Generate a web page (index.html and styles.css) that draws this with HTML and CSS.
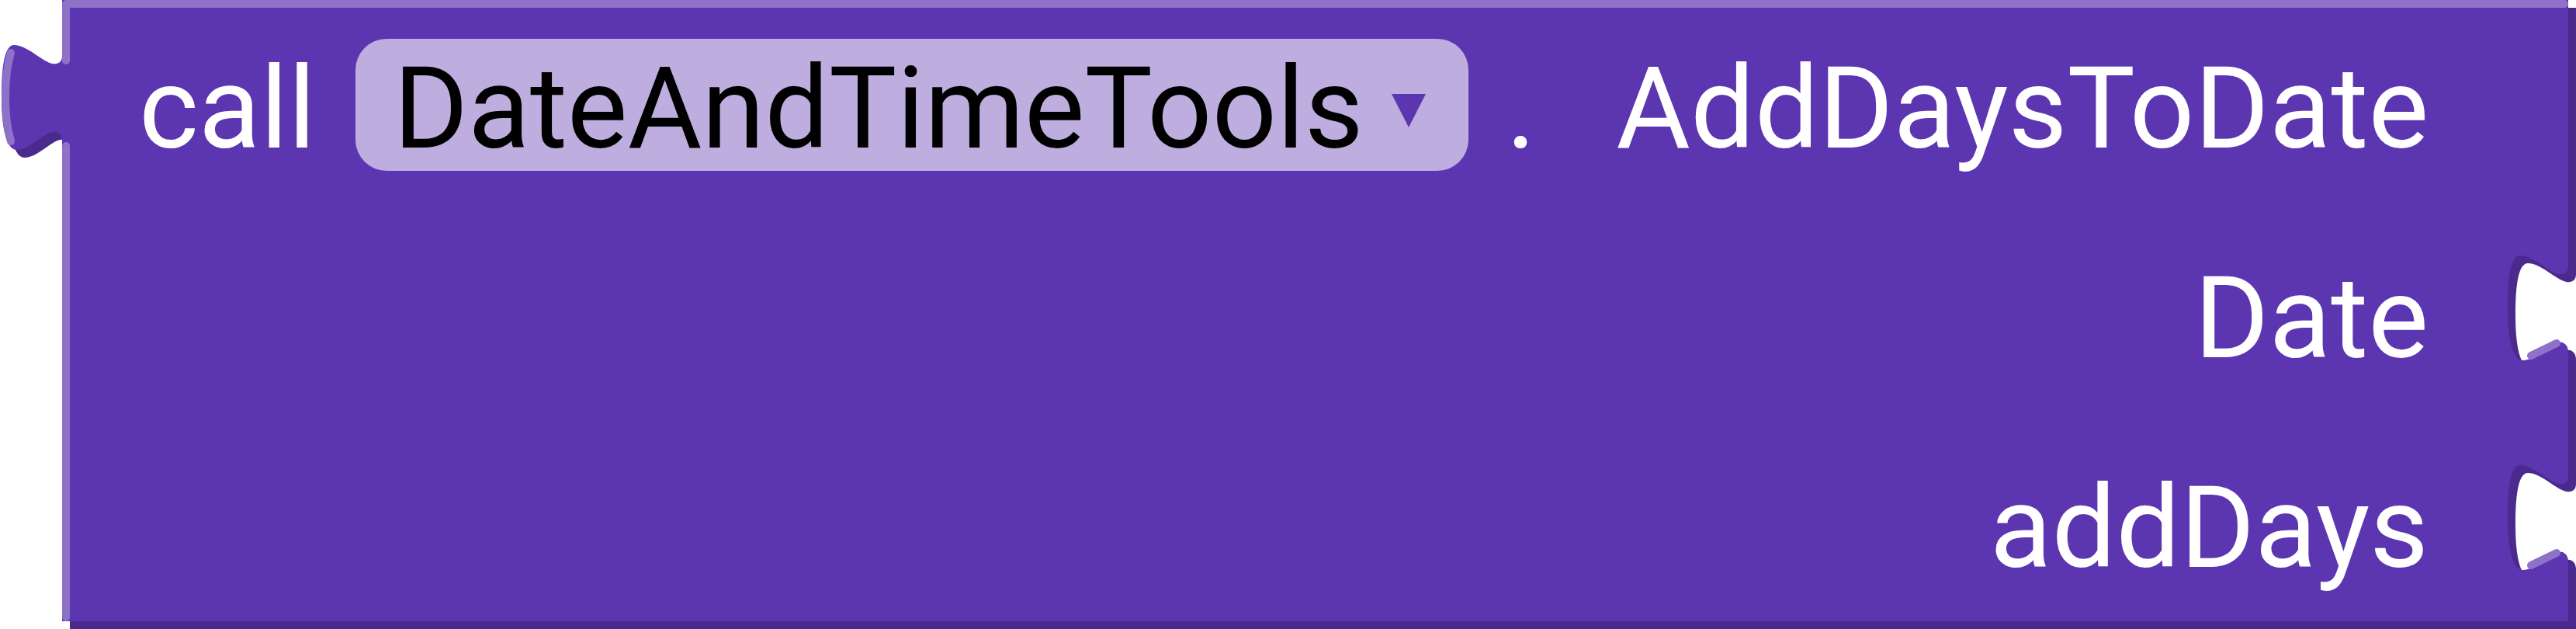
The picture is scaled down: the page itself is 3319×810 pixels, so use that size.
FILE: index.html
```html
<!DOCTYPE html>
<html lang="en">
<head>
    <meta charset="UTF-8">
    <title>call DateAndTimeTools.AddDaysToDate</title>
    <link rel="stylesheet" href="styles.css">
</head>
<body>
    <div class="block">
        <svg class="block-shape" width="3319" height="810" viewBox="0 0 3319 810">
            <defs>
                <path id="outline" d="M80,0 H3309 V343
                    C3309,351 3304,354 3297,353 C3284,351 3264,329 3247,329 C3234,329 3231,361 3231,396 C3231,436 3237,464 3251,464 C3267,464 3284,443 3297,441 C3304,440 3309,445 3309,453
                    V613
                    C3309,621 3304,624 3297,623 C3284,621 3264,599 3247,599 C3234,599 3231,631 3231,666 C3231,706 3237,734 3251,734 C3267,734 3284,713 3297,711 C3304,710 3309,715 3309,723
                    V800 H80 V182
                    C80,174 75,169 68,170 C55,172 38,193 22,193 C8,193 2,165 2,125 C2,90 5,58 18,58 C35,58 55,80 68,82 C75,83 80,80 80,72 Z"/>
            </defs>
            <use href="#outline" class="shape-dark" transform="translate(10 10)"/>
            <use href="#outline" class="shape-main"/>
            <path class="shape-light" d="M85,78 V5 H3304"/>
            <path class="shape-light" d="M85,188 V795"/>
            <path class="shape-light" d="M14,68 C9,85 7,105 7,125 C7,145 9,165 14,182"/>
            <path class="shape-light" d="M3261,458 L3294,442"/>
            <path class="shape-light" d="M3261,728 L3294,712"/>
        </svg>

        <div class="block-rows">
            <div class="block-row">
                <span>call</span>
                <div class="field-dropdown">
                    <span>DateAndTimeTools</span>
                    <svg class="dropdown-arrow" viewBox="0 0 44 43">
                        <path d="M0,0 H44 L22,43 Z"/>
                    </svg>
                </div>
                <span class="dot">.</span>
                <span class="method-name">AddDaysToDate</span>
            </div>
            <div class="block-row input">
                <span>Date</span>
            </div>
            <div class="block-row input">
                <span>addDays</span>
            </div>
        </div>
    </div>
</body>
</html>
```

FILE: styles.css
```css
body {
    margin: 0;
    overflow: hidden;
    background: #fff;
    font-family: Roboto, "Noto Sans", sans-serif;
}

.block {
    position: relative;
    width: 3319px;
    height: 810px;
}

.block-shape {
    position: absolute;
    top: 0;
    left: 0;
}

.shape-dark {
    fill: #4a2a8d;
}

.shape-main {
    fill: #5c35b0;
}

.shape-light {
    fill: none;
    stroke: #8d72c8;
    stroke-width: 10;
    stroke-linecap: round;
    stroke-linejoin: round;
}

.block-rows {
    position: relative;
    display: flex;
    flex-direction: column;
    padding: 5px 190px 0 179px;
    color: #fff;
    font-size: 146.67px;
}

.block-row {
    display: flex;
    align-items: baseline;
    height: 270px;
    line-height: 270px;
    white-space: nowrap;
}

.block-row.input {
    justify-content: flex-end;
}

.field-dropdown {
    display: flex;
    align-items: flex-start;
    box-sizing: border-box;
    height: 170px;
    margin-left: 51px;
    padding: 16.6px 55px 0 49px;
    background: #beaedf;
    border-radius: 40px;
    color: #000;
    line-height: 146.67px;
}

.dropdown-arrow {
    width: 44px;
    height: 43px;
    margin: 54.4px 0 0 36px;
    fill: #5c35b0;
}

.dot {
    margin-left: 49px;
}

.method-name {
    margin-left: 103px;
}
```
